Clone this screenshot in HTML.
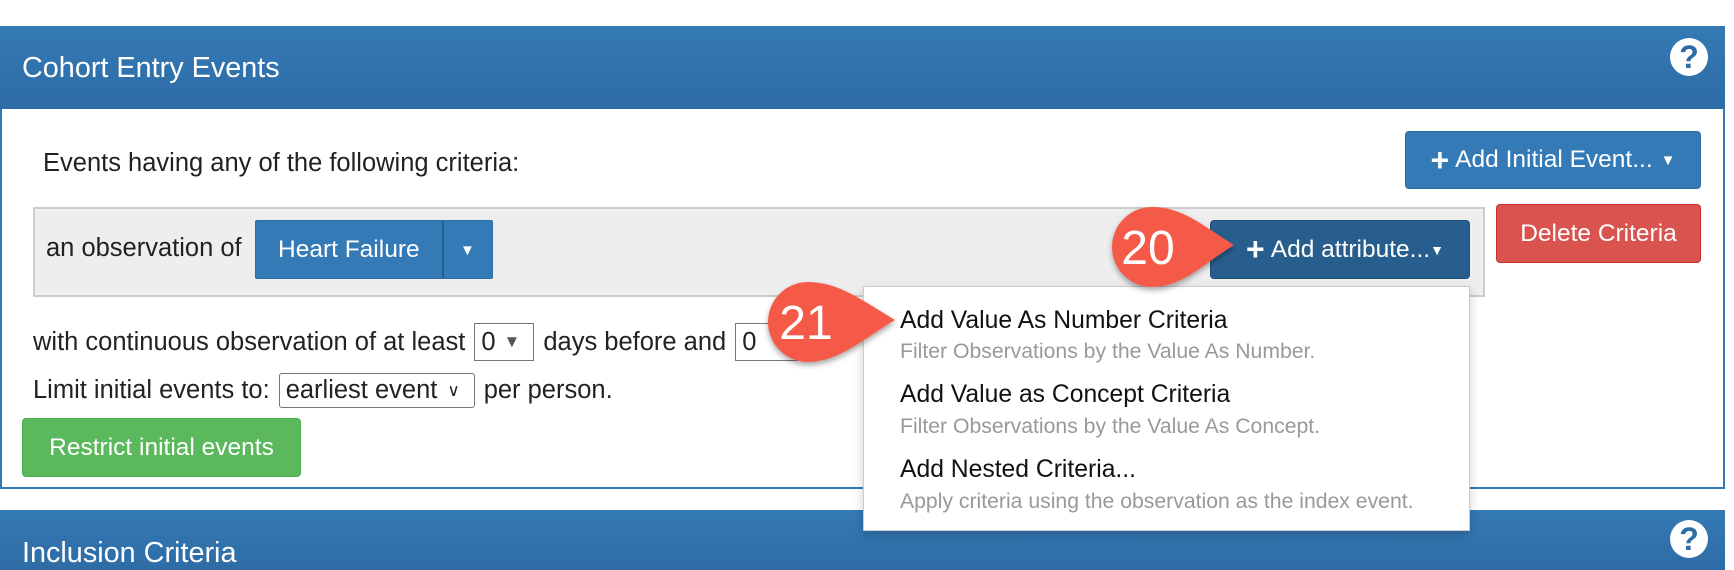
<!DOCTYPE html>
<html><head><meta charset="utf-8"><style>
*{box-sizing:border-box;margin:0;padding:0}
body{width:1734px;height:562px;overflow:hidden;background:#fff;font-family:"Liberation Sans",sans-serif;position:relative;color:#222}
.abs{position:absolute}
.hdr{background:linear-gradient(#3479b5,#2e6ca5);color:#fff}
.btn{position:absolute;display:flex;align-items:center;justify-content:center;color:#fff;border-radius:4px;font-size:24.5px;white-space:nowrap}
.help{position:absolute;width:38px;height:38px;border-radius:50%;background:#fff;color:#2e6ca5;font-weight:bold;font-size:32px;text-align:center;line-height:39px}
.t{position:absolute;font-size:25.5px;white-space:nowrap;line-height:1}
.row{position:absolute;left:33px;display:flex;align-items:center;font-size:25.5px;white-space:nowrap}
.sel{border:1.5px solid #777;background:#fff;display:flex;align-items:center;padding-left:6px;margin:0 9px}
.mi{position:absolute;left:900px;font-size:24.7px;color:#111;white-space:nowrap;line-height:1}
.ms{position:absolute;left:900px;font-size:21.2px;color:#999;white-space:nowrap;line-height:1}
</style></head><body>
<div class="abs" style="left:0;top:26px;width:1725px;height:463px;border:2px solid #3479b5"></div>
<div class="abs hdr" style="left:0;top:26px;width:1725px;height:83px"></div>
<div class="t" style="left:22px;top:54px;color:#fff;font-size:28.8px">Cohort Entry Events</div>
<div class="help" style="left:1670px;top:38px">?</div>
<div class="t" style="left:43px;top:151px">Events having any of the following criteria:</div>
<div class="btn" style="left:1405px;top:131px;width:296px;height:58px;background:#337ab7;border:1.5px solid #2e6da4"><b style="font-size:32px;margin-right:6px">+</b>Add Initial Event... <span style="font-size:15px;margin-left:8px">▼</span></div>
<div class="abs" style="left:33px;top:207px;width:1452px;height:90px;background:#eee;border:2px solid #ccc"></div>
<div class="t" style="left:46px;top:236px">an observation of</div>
<div class="btn" style="left:255px;top:220px;width:238px;height:59px;background:#337ab7;border:1.5px solid #2e6da4;border-radius:2px;justify-content:flex-start;padding-left:22px">Heart Failure</div>
<div class="abs" style="left:442px;top:221px;width:2px;height:57px;background:#285e8e"></div>
<div class="t" style="left:460px;top:243px;color:#fff;font-size:15px">▼</div>
<div class="btn" style="left:1210px;top:220px;width:260px;height:59px;background:#285e8e;border:1px solid #204d74;padding-left:10px"><b style="font-size:32px;margin-right:6px">+</b>Add attribute...<span style="font-size:14px">▼</span></div>
<div class="btn" style="left:1496px;top:204px;width:205px;height:59px;background:#d9534f;border:1.5px solid #c9302c">Delete Criteria</div>
<div class="row" style="top:323px;height:38px">with continuous observation of at least<span class="sel" style="width:60px;height:38px">0 <span style="color:#555;font-size:17px;margin-left:8px">▼</span></span>days before and<span class="sel" style="width:70px;height:38px">0</span></div>
<div class="row" style="top:373px;height:35px">Limit initial events to:<span class="sel" style="width:196px;height:35px;border-radius:3px">earliest event <span style="font-size:17px;margin-left:10px">∨</span></span>per person.</div>
<div class="btn" style="left:22px;top:418px;width:279px;height:59px;background:#5cb85c;border:1.5px solid #4cae4c">Restrict initial events</div>
<div class="abs hdr" style="left:0;top:510px;width:1725px;height:60px"></div>
<div class="t" style="left:22px;top:539px;color:#fff;font-size:28.8px">Inclusion Criteria</div>
<div class="help" style="left:1670px;top:520px">?</div>
<div class="abs" style="left:863px;top:286px;width:607px;height:245px;background:#fff;border:1px solid #ccc;box-shadow:0 4px 10px rgba(0,0,0,.18)"></div>
<div class="mi" style="top:309px">Add Value As Number Criteria</div>
<div class="ms" style="top:341px">Filter Observations by the Value As Number.</div>
<div class="mi" style="top:383px">Add Value as Concept Criteria</div>
<div class="ms" style="top:416px">Filter Observations by the Value As Concept.</div>
<div class="mi" style="top:458px">Add Nested Criteria...</div>
<div class="ms" style="top:491px">Apply criteria using the observation as the index event.</div>
<svg class="abs" style="left:0;top:0" width="1734" height="562">
<defs><filter id="s"><feDropShadow dx="0" dy="3" stdDeviation="3" flood-opacity=".35"/></filter></defs>
<path d="M1152 207 C1182 207 1202 225 1234 245 C1202 265 1182 287 1152 287 A40 40 0 0 1 1152 207Z" fill="#f55a4a" filter="url(#s)"/>
<text x="1148" y="264" fill="#fff" font-size="48" text-anchor="middle" font-family="Liberation Sans">20</text>
<path d="M808 282 C838 282 862 300 895 320 C862 340 838 362 808 362 A40 40 0 0 1 808 282Z" fill="#f55a4a" filter="url(#s)"/>
<text x="806" y="339" fill="#fff" font-size="48" text-anchor="middle" font-family="Liberation Sans">21</text>
</svg>
</body></html>
